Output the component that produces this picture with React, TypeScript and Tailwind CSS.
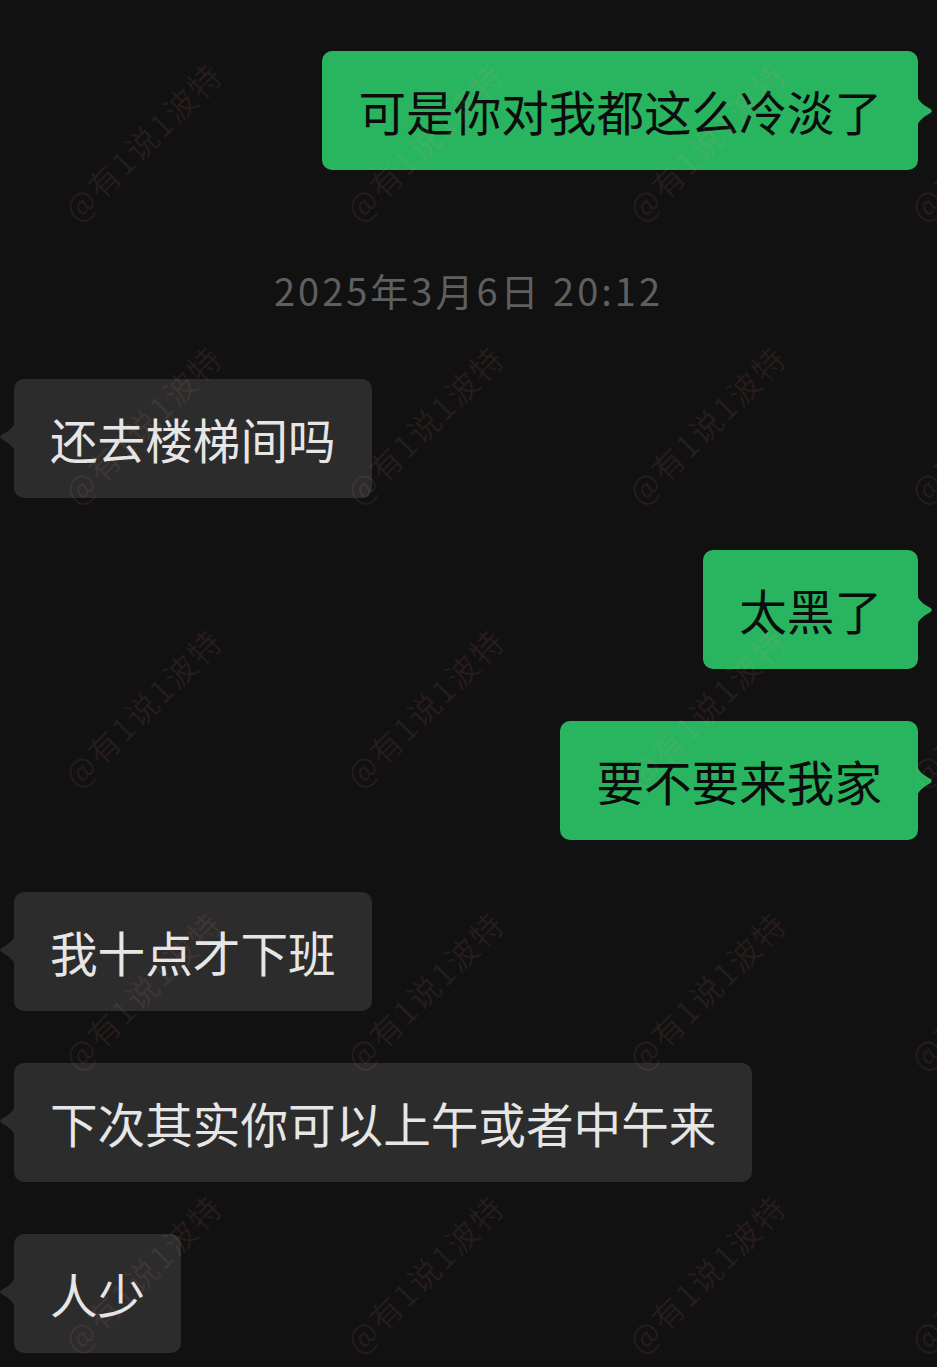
import React from "react";

const FONT = { fontFamily: '"Noto Sans CJK SC", "Noto Sans", sans-serif' };

function RightTail() {
  return (
    <svg
      className="absolute right-[-15px] top-[45px]"
      width="16"
      height="30"
      viewBox="0 0 16 30"
    >
      <path
        d="M0 0 C2 6 8 10 13.5 13 Q16 15 13.5 17 C8 20 2 24 0 30 Z"
        fill="#29b560"
      />
    </svg>
  );
}

function LeftTail() {
  return (
    <svg
      className="absolute left-[-15px] top-[43px]"
      width="16"
      height="30"
      viewBox="0 0 16 30"
    >
      <path
        d="M16 0 C14 6 8 10 2.5 13 Q0 15 2.5 17 C8 20 14 24 16 30 Z"
        fill="#2c2c2c"
      />
    </svg>
  );
}

function Me({ text }: { text: string }) {
  return (
    <div className="flex justify-end pr-[19px]">
      <div className="relative flex h-[119px] items-center rounded-[10px] bg-[#29b560] px-[36px] text-[47.6px] leading-none text-[#0c0c0c] whitespace-nowrap">
        {text}
        <RightTail />
      </div>
    </div>
  );
}

function Them({ text }: { text: string }) {
  return (
    <div className="flex justify-start pl-[14px]">
      <div className="relative flex h-[119px] items-center rounded-[10px] bg-[#2c2c2c] px-[36px] text-[47.6px] leading-none text-[#e6e6e6] whitespace-nowrap">
        {text}
        <LeftTail />
      </div>
    </div>
  );
}

export default function App() {
  const cells = Array.from({ length: 20 });
  return (
    <div
      className="relative h-[1367px] w-full overflow-hidden bg-[#111111]"
      style={FONT}
    >
      <div className="flex flex-col pt-[51px]">
        <Me text="可是你对我都这么冷淡了" />
        <div className="mt-[89px] flex h-[60px] items-center justify-center text-[38px] tracking-[3px] text-[#5f5f5f]">
          2025年3月6日 20:12
        </div>
        <div className="mt-[60px] flex flex-col gap-[52px]">
          <Them text="还去楼梯间吗" />
          <Me text="太黑了" />
          <Me text="要不要来我家" />
          <Them text="我十点才下班" />
          <Them text="下次其实你可以上午或者中午来" />
          <Them text="人少" />
        </div>
      </div>
      <div className="pointer-events-none absolute left-[1px] top-[-1px] grid grid-cols-[repeat(4,282px)] auto-rows-[283px]">
        {cells.map((_, i) => (
          <div key={i} className="flex items-center justify-center">
            <span className="rotate-[-45deg] whitespace-nowrap text-[32px] tracking-[2px] text-[rgba(255,140,140,0.09)]">
              @有1说1波特
            </span>
          </div>
        ))}
      </div>
    </div>
  );
}
